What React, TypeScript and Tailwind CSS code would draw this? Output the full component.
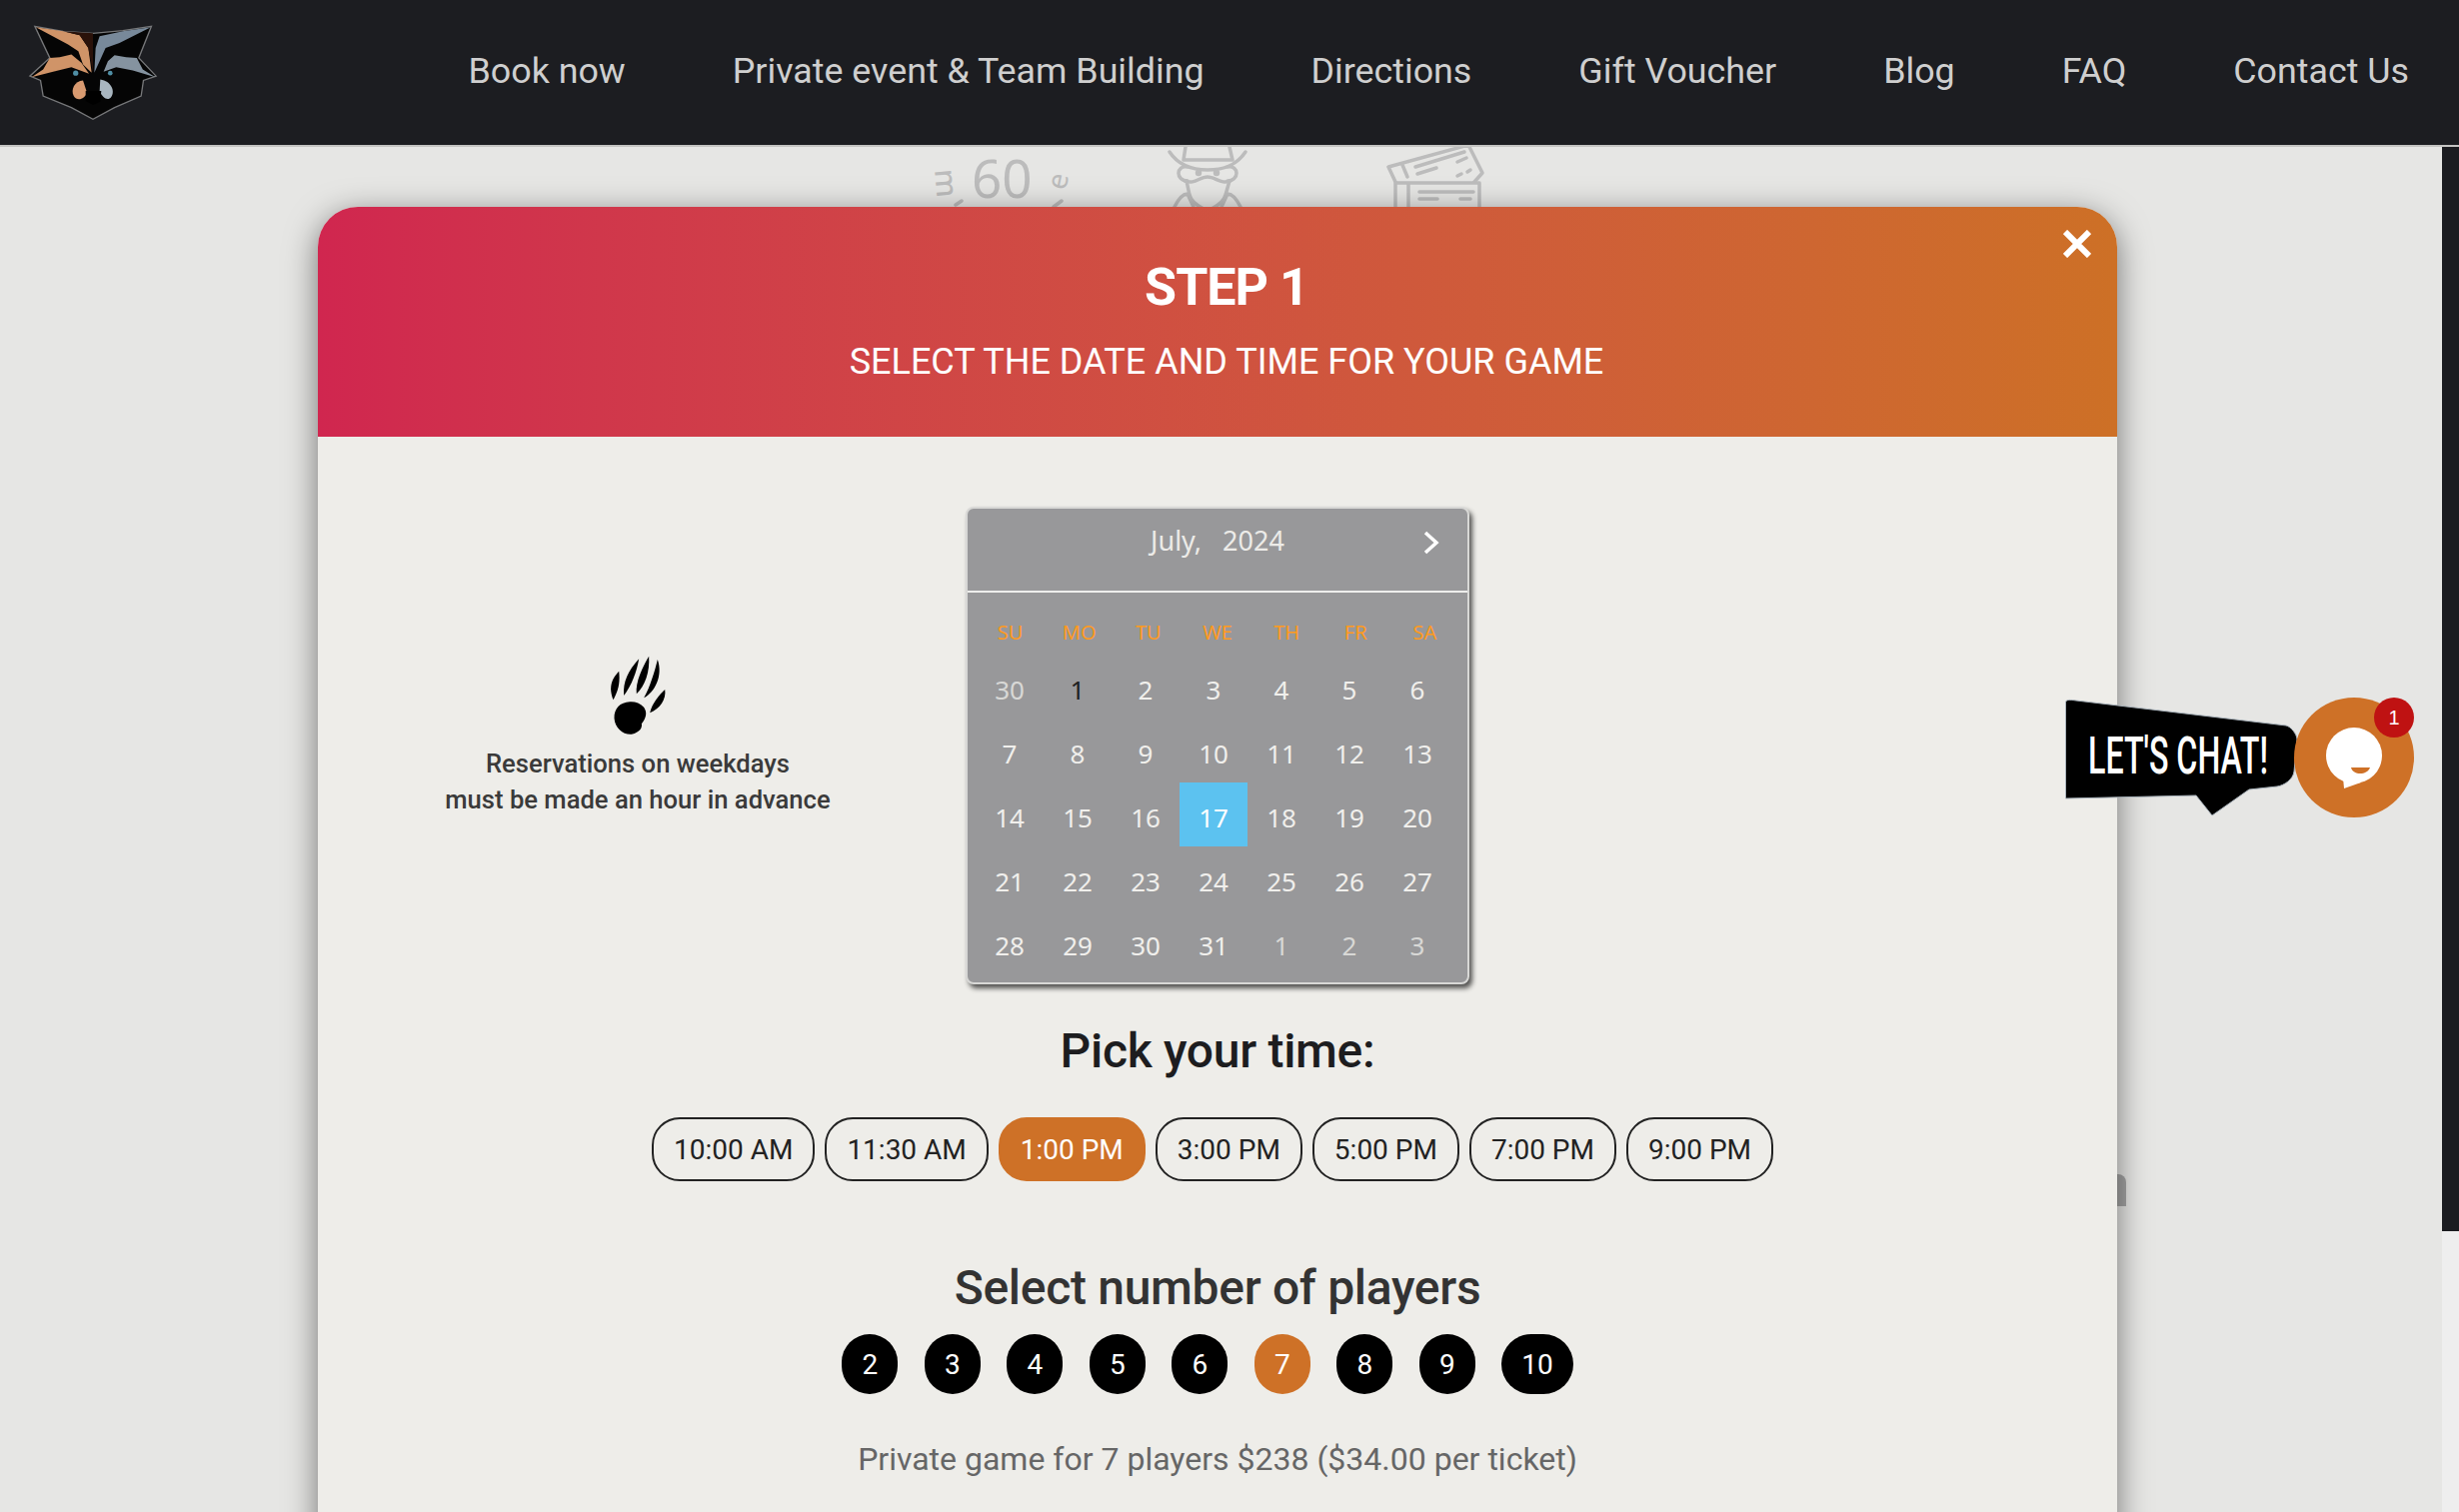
const navLinks = ['Book now', 'Private event & Team Building', 'Directions', 'Gift Voucher', 'Blog', 'FAQ', 'Contact Us']
const weekdays = ['SU', 'MO', 'TU', 'WE', 'TH', 'FR', 'SA']
const times = ['10:00 AM', '11:30 AM', '1:00 PM', '3:00 PM', '5:00 PM', '7:00 PM', '9:00 PM']
const players = [2, 3, 4, 5, 6, 7, 8, 9, 10]

const days = [
  30, 1, 2, 3, 4, 5, 6,
  7, 8, 9, 10, 11, 12, 13,
  14, 15, 16, 17, 18, 19, 20,
  21, 22, 23, 24, 25, 26, 27,
  28, 29, 30, 31, 1, 2, 3,
]

function Logo() {
  return (
    <svg viewBox="85 78 390 292" className="w-[130px] h-[97px] blur-[0.5px]">
      <path d="M105 85 L190 100 L280 106 L370 98 L456 85 L418 180 L470 235 L432 248 L425 295 L345 330 L280 365 L215 330 L130 295 L122 248 L90 235 L150 180 Z" fill="#050505" stroke="#77787a" strokeWidth="4" />
      <path d="M108 88 L190 100 L240 112 L266 150 L276 225 L250 200 L236 160 L205 140 Z" fill="#d09468" />
      <path d="M190 100 L280 106 L280 225 L266 150 L240 112 Z" fill="#2a120a" />
      <path d="M150 180 L180 178 L215 170 L245 195 L268 228 L215 208 L160 222 L95 238 L130 215 Z" fill="#d09468" />
      <path d="M454 88 L370 100 L300 115 L288 150 L284 225 L300 190 L318 150 L360 135 Z" fill="#78899a" />
      <path d="M412 180 L380 178 L345 172 L325 190 L312 222 L350 208 L400 218 L468 238 L430 215 Z" fill="#8593a0" />
      <path d="M250 248 C225 250 212 275 222 295 C232 312 255 305 262 285 Z" fill="#d89a70" />
      <path d="M302 245 C335 250 348 280 335 298 C325 312 308 300 300 280 Z" fill="#a9b6c0" />
      <path d="M258 280 L305 280 L302 312 L280 322 L258 310 Z" fill="#000" />
      <circle cx="228" cy="226" r="8" fill="#4f8ea5" />
      <circle cx="332" cy="226" r="7" fill="#4f8ea5" />
    </svg>
  )
}

function BackgroundIcons() {
  return (
    <svg viewBox="0 0 600 62" className="absolute left-[930px] top-0 w-[600px] h-[62px]" fill="none" stroke="#bcbcbc" strokeWidth="3.5" strokeLinecap="round" strokeLinejoin="round">
      <text x="42" y="51" fontSize="53" fontFamily="Noto Sans, sans-serif" fill="#bcbcbc" stroke="none">60</text>
      <text x="0" y="0" fontSize="30" fontFamily="Noto Sans, sans-serif" fontWeight="500" fill="#bcbcbc" stroke="none" transform="translate(5 23) rotate(85)">m</text>
      <text x="0" y="0" fontSize="28" fontFamily="Noto Sans, sans-serif" fill="#bcbcbc" stroke="none" transform="translate(136 44) rotate(-78)">e</text>
      <path d="M26 58 L32 54 M124 60 L132 54" />

      <path d="M256 0 L254 13 M300 0 L303 13 M254 13 L303 13" />
      <path d="M240 5 C250 20 265 23 278 23 C292 23 306 20 316 5" />
      <path d="M258 20 C246 18 246 34 258 34 M298 20 C310 18 310 34 298 34" />
      <path d="M255 34 C265 38 270 30 278 30 C286 30 292 38 301 34" />
      <path d="M257 34 L260 48 C262 56 270 60 274 62 M300 34 L296 48 C294 56 286 60 282 62" />
      <path d="M245 60 C250 50 255 47 258 47 L264 60 M311 60 C306 50 301 47 298 47 L292 60" />
      <circle cx="269" cy="26" r="1.5" fill="#bcbcbc" />
      <circle cx="287" cy="26" r="1.5" fill="#bcbcbc" />

      <path d="M466 35 L459 20 L539 -2 L553 26 L545 35" />
      <path d="M473 18 L478 30 M486 20 L535 5 M488 27 L507 21 M528 15 L537 11 M528 29 L532 27 M538 25 L541 23" />
      <path d="M466 62 L466 36 L550 36 L550 62 M479 36 L479 62" />
      <path d="M490 45 L544 45 M490 52 L508 52 M531 52 L541 52" />
    </svg>
  )
}

function PawIcon() {
  return (
    <svg viewBox="570 80 170 240" className="w-[57px] h-[80px]" fill="#000">
      <path d="M597 127 C575 150 565 175 580 213 C592 190 602 165 597 127 Z" />
      <path d="M657 90 C625 125 608 160 612 200 C635 170 650 130 657 90 Z" />
      <path d="M687 82 C670 110 645 160 650 195 C675 170 690 130 687 82 Z" />
      <path d="M713 92 C705 125 690 175 672 207 C705 190 730 140 713 92 Z" />
      <path d="M735 182 C720 195 695 225 690 252 C720 240 740 210 735 182 Z" />
      <path d="M630 219 C600 220 582 240 583 268 C585 298 610 318 635 316 C660 312 668 295 665 285 C680 265 682 250 672 235 C660 222 645 218 630 219 Z" />
    </svg>
  )
}

function Calendar() {
  return (
    <div className="w-[504px] h-[478px] shrink-0 rounded-[8px] border-2 border-[#d8d8d6] bg-[#98989a] shadow-[3px_4px_5px_rgba(0,0,0,0.65)] font-['Noto_Sans',sans-serif]">
      <div className="relative h-[84px] flex items-start justify-center pt-[14px] text-[27px] leading-[36px] text-[#ecebe8] border-b-2 border-[#eeeeec]">
        <span className="whitespace-pre">July,   2024</span>
        <svg viewBox="0 0 16 24" className="absolute right-[28px] top-[22px] w-[16px] h-[24px]" fill="none" stroke="#fff" strokeWidth="3.5">
          <path d="M2 2 L13 12 L2 22" />
        </svg>
      </div>
      <div className="grid grid-cols-7 px-[8px] pt-[20px] pb-[2px] text-center text-[20px] leading-[40px] text-[#ff9a1e]">
        {weekdays.map((d) => (
          <div key={d}>{d}</div>
        ))}
      </div>
      <div className="grid grid-cols-7 pl-[8px] pr-[16px] text-center text-[26px] leading-[70px]">
        {days.map((d, i) => {
          let cls = 'h-[64px] text-[#f0efec]'
          if (i === 0) cls = 'h-[64px] text-[#d8d8d6]'
          if (i === 1) cls = 'h-[64px] text-[#1f1f22]'
          if (i === 17) cls = 'h-[64px] bg-[#5cc2f0] text-white'
          if (i > 31) cls = 'h-[64px] text-[#d8d8d6]'
          return (
            <div key={i} className={cls}>
              {d}
            </div>
          )
        })}
      </div>
    </div>
  )
}

function ChatWidget() {
  return (
    <div className="absolute left-[2060px] top-[695px] w-[360px] h-[130px]">
      <svg viewBox="2060 695 360 130" className="w-[360px] h-[130px]">
        <path
          d="M2066.5 703 C2066.5 700 2070 700 2077 701 L2287 726 C2292 727 2298 735 2298 740 L2295 772 C2294 780 2285 786 2278 787 L2250 790 L2213 816 L2197 796 L2066.5 799 Z"
          fill="#000"
          stroke="#aab4bc"
          strokeWidth="1"
        />
        <text x="2089" y="774" fontSize="52" fontWeight="500" fontFamily="Roboto, sans-serif" fill="#fff" textLength="180" lengthAdjust="spacingAndGlyphs">
          LET'S CHAT!
        </text>
        <circle cx="2355" cy="758" r="60" fill="#ce7127" />
        <circle cx="2355" cy="756" r="28" fill="#fff" />
        <path d="M2344 778 L2345 789 L2362 783 Z" fill="#fff" />
        <path d="M2352 768 C2354 776 2368 776 2371 768 Z" fill="#ce7127" />
        <circle cx="2395" cy="718" r="20" fill="#bf1212" />
        <text x="2395" y="725" textAnchor="middle" fontSize="20" fontFamily="Liberation Sans, sans-serif" fill="#fff">
          1
        </text>
      </svg>
    </div>
  )
}

export default function App() {
  return (
    <div className="relative h-screen overflow-hidden flex flex-col bg-[#e6e6e4] font-['Roboto',sans-serif]">
      <header className="h-[147px] shrink-0 flex items-center justify-between bg-[#1c1d21] border-b-2 border-[#c4c4c2] pl-[28px] pr-[50px]">
        <Logo />
        <nav className="flex gap-[107px] mb-[2px] text-[35.8px] text-[#cfcfcf]">
          {navLinks.map((l) => (
            <a key={l} className="whitespace-nowrap">
              {l}
            </a>
          ))}
        </nav>
      </header>

      <div className="flex-1 min-h-0 flex">
        <main className="relative flex-1 min-w-0 pt-[60px]">
          <BackgroundIcons />
          <div className="absolute left-[2100px] top-[1028px] w-[27px] h-[32px] rounded-tr-[8px] bg-[#a4a4a4]" />

          <div className="relative ml-[318px] w-[1800px] rounded-t-[40px] bg-[#eeede9] shadow-[0_8px_32px_rgba(0,0,0,0.5)]">
            <div className="relative h-[230px] rounded-t-[40px] bg-gradient-to-r from-[#d0264f] to-[#cd7026] pt-[51px] pl-[18px] text-center text-white">
              <h1 className="text-[52px] leading-[60px] font-bold tracking-[-1px]">STEP 1</h1>
              <p className="mt-[24px] text-[36px] leading-[40px]">SELECT THE DATE AND TIME FOR YOUR GAME</p>
              <svg viewBox="0 0 28 28" className="absolute right-[26px] top-[23px] w-[28px] h-[28px]" stroke="#fff" strokeWidth="6">
                <path d="M2 2 L26 26 M26 2 L2 26" />
              </svg>
            </div>

            <div className="pt-[70px] pb-[60px]">
              <div className="flex">
                <div className="w-[640px] mr-[8px] pt-[149px] flex flex-col items-center text-center text-[25.6px] leading-[36px] text-[#3a3a3a]">
                  <PawIcon />
                  <p className="mt-[10px] font-medium">
                    Reservations on weekdays
                    <br />
                    must be made an hour in advance
                  </p>
                </div>
                <Calendar />
              </div>

              <h2 className="mt-[37px] text-center text-[48px] leading-[60px] font-medium tracking-[-0.3px] text-[#1d1d1f]">Pick your time:</h2>
              <div className="mt-[36px] pr-[10px] flex justify-center gap-[10px]">
                {times.map((t) => (
                  <button
                    key={t}
                    className={
                      t === '1:00 PM'
                        ? 'h-[64px] px-[20px] pt-[2px] rounded-[28px] border-2 border-[#ce7127] bg-[#ce7127] text-[28px] text-white'
                        : 'h-[64px] px-[20px] pt-[2px] rounded-[28px] border-2 border-[#222] text-[28px] text-[#222]'
                    }
                  >
                    {t}
                  </button>
                ))}
              </div>

              <h2 className="mt-[77px] text-center text-[48px] leading-[60px] font-medium tracking-[-0.3px] text-[#333]">Select number of players</h2>
              <div className="mt-[16px] pr-[20px] flex justify-center gap-[26.5px]">
                {players.map((n) => (
                  <div
                    key={n}
                    className={
                      n === 7
                        ? 'h-[60px] min-w-[56px] px-[20px] pt-[1px] rounded-full bg-[#ce7127] flex items-center justify-center text-[28px] text-white'
                        : 'h-[60px] min-w-[56px] px-[20px] pt-[1px] rounded-full bg-black flex items-center justify-center text-[28px] text-white'
                    }
                  >
                    {n}
                  </div>
                ))}
              </div>

              <p className="mt-[45px] text-center text-[32px] leading-[40px] text-[#666]">Private game for 7 players $238 ($34.00 per ticket)</p>
            </div>
          </div>
        </main>

        <div className="w-[17px] shrink-0 bg-[#eeeeee]">
          <div className="h-[1085px] bg-[#1b1c20]" />
        </div>
      </div>

      <ChatWidget />
    </div>
  )
}
